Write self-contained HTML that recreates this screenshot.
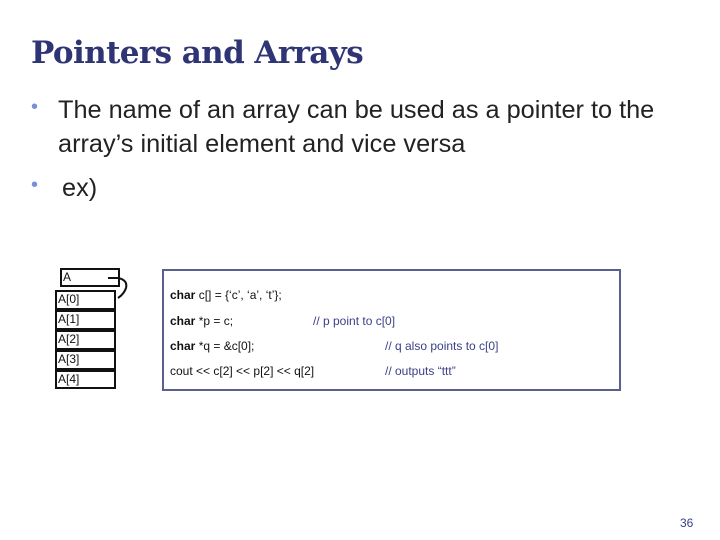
<!DOCTYPE html>
<html><head><style>
body{margin:0;width:720px;height:540px;background:#fff;position:relative;overflow:hidden;font-family:"Liberation Sans",sans-serif}
.t{position:absolute;left:31px;top:35px;font-family:"DejaVu Serif",serif;font-weight:bold;font-size:31px;color:#2f3574;letter-spacing:-0.6px;white-space:nowrap}
.b{position:absolute;font-size:25.3px;color:#222;line-height:34px;white-space:nowrap}
.dot{position:absolute;color:#7a8fd8;font-size:20px}
.box{position:absolute;border:2px solid #111;box-sizing:border-box;font-size:12px;line-height:15px;padding-left:1px;color:#111}
.code{position:absolute;left:162px;top:269px;width:459px;height:122px;border:2px solid #5b5f90;box-sizing:border-box}
.l{position:absolute;left:170px;font-size:12px;color:#111;white-space:nowrap}
.c{position:absolute;font-size:12px;color:#3a3f86;white-space:nowrap}
</style></head><body>
<div class="t">Pointers and Arrays</div>
<div class="dot" style="left:31px;top:96px">•</div>
<div class="b" style="left:58px;top:93px">The name of an array can be used as a pointer to the<br>array’s initial element and vice versa</div>
<div class="dot" style="left:31px;top:174px">•</div>
<div class="b" style="left:62px;top:171px">ex)</div>
<div class="box" style="left:60px;top:268px;width:60px;height:19px">A</div>
<svg style="position:absolute;left:100px;top:270px" width="40" height="32"><path d="M8 8 H18 Q28 10 26 18 Q24 24 18 28" fill="none" stroke="#111" stroke-width="2"/></svg>
<div class="box" style="left:55px;top:290px;width:61px;height:20px">A[0]</div>
<div class="box" style="left:55px;top:310px;width:61px;height:20px">A[1]</div>
<div class="box" style="left:55px;top:330px;width:61px;height:20px">A[2]</div>
<div class="box" style="left:55px;top:350px;width:61px;height:20px">A[3]</div>
<div class="box" style="left:55px;top:370px;width:61px;height:19px">A[4]</div>
<div class="code"></div>
<div class="l" style="top:288px"><b>char</b> c[] = {‘c’, ‘a’, ‘t’};</div>
<div class="l" style="top:314px"><b>char</b> *p = c;</div>
<div class="c" style="left:313px;top:314px">// p point to c[0]</div>
<div class="l" style="top:339px"><b>char</b> *q = &amp;c[0];</div>
<div class="c" style="left:385px;top:339px">// q also points to c[0]</div>
<div class="l" style="top:364px">cout &lt;&lt; c[2] &lt;&lt; p[2] &lt;&lt; q[2]</div>
<div class="c" style="left:385px;top:364px">// outputs “ttt”</div>
<div style="position:absolute;left:680px;top:516px;font-size:12px;color:#3a3f86">36</div>
</body></html>
